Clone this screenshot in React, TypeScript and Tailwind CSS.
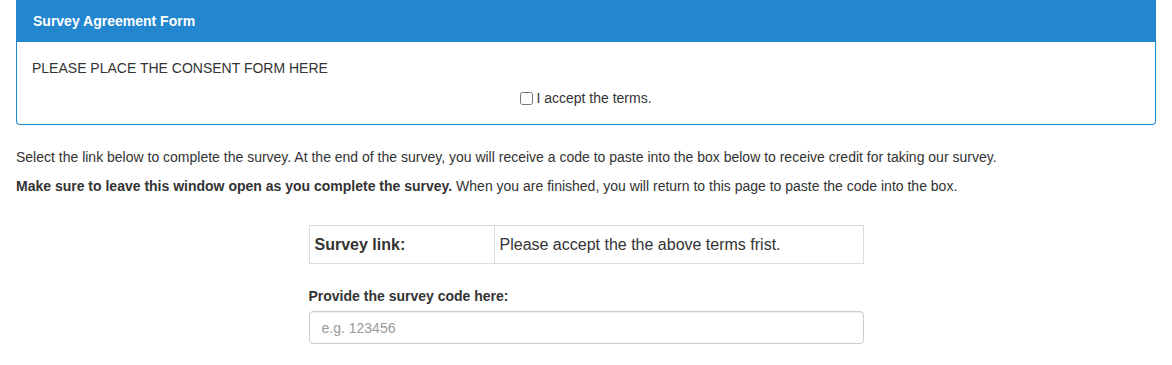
export default function App() {
  return (
    <div className="bg-white text-[#333] text-[14px] leading-5 font-['Liberation_Sans',Arial,sans-serif] pb-6">
      <div className="mx-4 rounded-b border border-t-0 border-[#2387d0] bg-white">
        <div className="h-[42px] bg-[#2387d0] px-4 flex items-center text-white font-bold text-[14px]">
          Survey Agreement Form
        </div>
        <div className="px-[15px] pt-[16px] pb-[16px]">
          <p>PLEASE PLACE THE CONSENT FORM HERE</p>
          <div className="mt-[10px] flex items-center justify-center">
            <input type="checkbox" className="w-[13px] h-[13px] mr-[3px]" />
            <span>I accept the terms.</span>
          </div>
        </div>
      </div>

      <div className="px-4 mt-[22px]">
        <p className="mb-[9px]">
          Select the link below to complete the survey. At the end of the survey, you will receive a code to paste into the box below to receive credit for taking our survey.
        </p>
        <p>
          <span className="font-bold">Make sure to leave this window open as you complete the survey.</span> When you are finished, you will return to this page to paste the code into the box.
        </p>
      </div>

      <div className="w-[555px] mx-auto mt-[29px]">
        <table className="w-full border-collapse border border-[#ddd]">
          <tbody>
            <tr className="h-[38px]">
              <td className="w-[185px] border border-[#ddd] px-[5px] text-[16px] font-bold">Survey link:</td>
              <td className="border border-[#ddd] px-[5px] text-[16px]">Please accept the the above terms frist.</td>
            </tr>
          </tbody>
        </table>
        <label className="block mt-[22px] mb-[5px] font-bold">Provide the survey code here:</label>
        <input
          type="text"
          placeholder="e.g. 123456"
          className="w-full h-[33px] border border-[#ccc] rounded px-3 text-[14px] placeholder:text-[#999] outline-none shadow-[inset_0_1px_1px_rgba(0,0,0,0.075)]"
        />
      </div>
    </div>
  );
}
